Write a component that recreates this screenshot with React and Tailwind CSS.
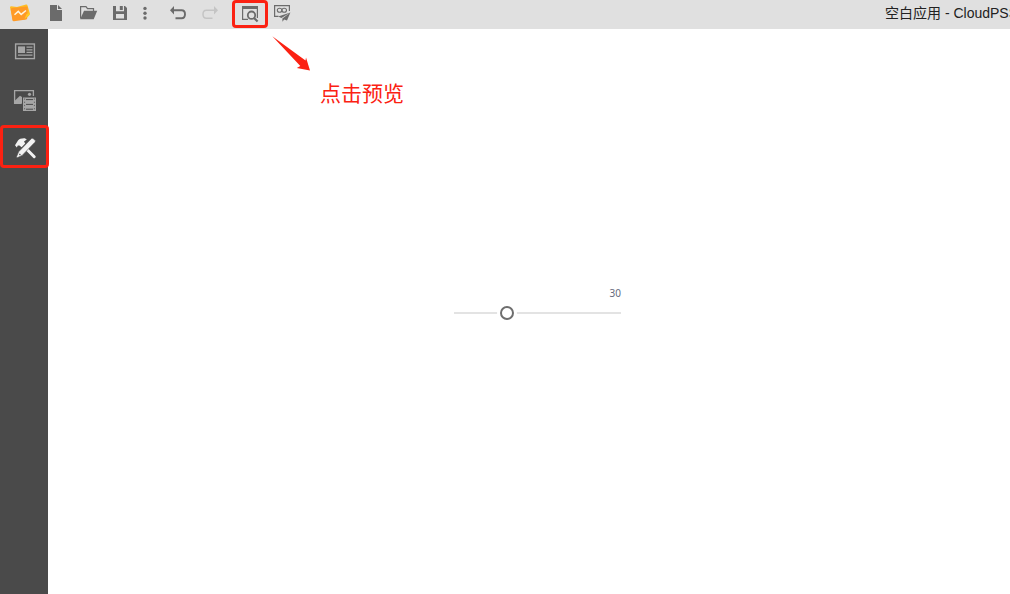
import { useState } from 'react';

function ToolButton({ label, width = 'w-8', disabled = false, marked = false, className = '', children }) {
  return (
    <button
      type="button"
      aria-label={label}
      disabled={disabled}
      className={`relative h-full shrink-0 ${width} ${disabled ? 'text-[#c4c4c4]' : 'text-[#6b6b6b]'} ${className}`}
    >
      {children}
      {marked && <span className="absolute -inset-x-0.5 top-0 h-7 rounded-sm border-3 border-[#fb2112]" />}
    </button>
  );
}

function Icon({ viewBox = '0 0 32 29', children }) {
  return (
    <svg viewBox={viewBox} className="block size-full" fill="currentColor" aria-hidden="true">
      {children}
    </svg>
  );
}

function Logo() {
  return (
    <a href="#home" aria-label="CloudPSS" className="h-full w-10 shrink-0">
      <Icon viewBox="0 0 40 29">
        <path d="M10 7.5 Q10 6.3 11.2 6.2 L17 7 L26 4.6 Q27.3 4.4 27.6 5.8 L29.8 13.2 Q30 14.4 29 15.4 L25 19.5 L13 20 Z" fill="#ffbd22" />
        <path d="M12 8 L26.6 6.6 Q27.6 6.6 27.7 7.6 L27.2 18.2 Q27.2 19.2 26.2 19.4 L14 21.3 Q12.7 21.4 12.4 20.3 L10.8 9.4 Q10.7 8.2 12 8 Z" fill="#ff9a26" />
        <path d="M24.5 19 L26.5 14 L29.6 13 Q29.8 14.6 29 15.4 Z" fill="#ffca24" />
        <path d="M14.5 14.8 L18.3 11.4 L21.2 14.4 L26 10.5" fill="none" stroke="#fff6df" strokeWidth="1.5" />
      </Icon>
    </a>
  );
}

function TopBar() {
  return (
    <header className="flex h-[29px] items-stretch overflow-hidden bg-[#e0e0e0]">
      <Logo />
      <ToolButton label="新建">
        <Icon>
          <path d="M10 5 H17 V10 H22 V21 H10 Z M18 5 L22 9 H18 Z" />
        </Icon>
      </ToolButton>
      <ToolButton label="打开">
        <Icon>
          <path d="M8.6 18.5 V6.7 H14 L15.5 8.7 H21.5 V11" fill="none" stroke="currentColor" strokeWidth="1.2" />
          <path d="M12 10.8 H25.2 L21.7 19.2 H8.2 Z" />
        </Icon>
      </ToolButton>
      <ToolButton label="保存">
        <Icon>
          <path fillRule="evenodd" d="M9 6 H12 V11.3 H20 V6 H21 L23 8 V20 H9 Z M12 14 V18.5 H20 V14 Z M15.8 6 H18.8 V10 H15.8 Z" />
        </Icon>
      </ToolButton>
      <ToolButton label="更多" width="w-[18px]">
        <Icon viewBox="0 0 18 29">
          <circle cx="9" cy="8.4" r="1.7" />
          <circle cx="9" cy="13.2" r="1.7" />
          <circle cx="9" cy="18" r="1.7" />
        </Icon>
      </ToolButton>
      <ToolButton label="撤销" className="ml-2">
        <Icon>
          <path d="M8 10.2 L12 6 V14.4 Z" />
          <path d="M11 10.2 H19.6 Q23 10.2 23 14.2 Q23 18.2 19.6 18.2 H13.5" fill="none" stroke="currentColor" strokeWidth="1.9" />
        </Icon>
      </ToolButton>
      <ToolButton label="重做" disabled>
        <Icon>
          <path d="M24 10.2 L20 6 V14.4 Z" />
          <path d="M21 10.2 H12.4 Q9 10.2 9 14.2 Q9 18.2 12.4 18.2 H18.5" fill="none" stroke="currentColor" strokeWidth="1.5" />
        </Icon>
      </ToolButton>
      <ToolButton label="预览" className="ml-2" marked>
        <Icon>
          <path d="M8 6 H24 V9 H8 Z" />
          <path d="M8.6 9 V19.4 H14 M23.4 9 V18" fill="none" stroke="currentColor" strokeWidth="1.2" />
          <circle cx="17.5" cy="15.2" r="3.7" fill="none" stroke="currentColor" strokeWidth="1.8" />
          <path d="M20 18 L23.6 21.5" stroke="currentColor" strokeWidth="2.2" />
        </Icon>
      </ToolButton>
      <ToolButton label="发布">
        <Icon>
          <path d="M12.5 16.4 H8.6 V5.6 H23.4 V11" fill="none" stroke="currentColor" strokeWidth="1.2" />
          <ellipse cx="13.6" cy="10.3" rx="2.3" ry="2" fill="none" stroke="currentColor" strokeWidth="1.1" />
          <ellipse cx="18.2" cy="10.3" rx="2.3" ry="2" fill="none" stroke="currentColor" strokeWidth="1.1" />
          <path d="M24.4 12.4 L12.2 16.6 L15.4 18 Z M24.4 12.4 L16.4 18.4 V21.8 L18.2 19.4 L21 20.4 Z" />
        </Icon>
      </ToolButton>
      <div className="flex-1" />
      <h1 className="w-[125px] shrink-0 overflow-hidden whitespace-nowrap font-['Liberation_Sans','Noto_Sans_CJK_SC',sans-serif] text-sm leading-[27px] text-[#222]">
        空白应用 - CloudPSS
      </h1>
    </header>
  );
}

function SideButton({ label, active = false, marked = false, children }) {
  return (
    <button
      type="button"
      aria-label={label}
      aria-pressed={active}
      className={`relative size-12 shrink-0 ${active ? 'text-[#f2f2f2]' : 'text-[#a6a6a6]'}`}
    >
      <Icon viewBox="0 0 48 48">{children}</Icon>
      {marked && <span className="absolute top-0 left-0 z-10 h-[43px] w-[49px] rounded-sm border-3 border-[#fb2112]" />}
    </button>
  );
}

function SideBar() {
  return (
    <nav className="relative z-10 flex w-12 shrink-0 flex-col bg-[#4a4a4a]">
      <SideButton label="总览">
        <rect x="15.6" y="15" width="18.8" height="14.6" fill="none" stroke="currentColor" strokeWidth="1.4" />
        <path d="M18 17.4 H25 V24 H18 Z" />
        <path d="M26.5 18.2 H32.5 M26.5 20.8 H32.5 M26.5 23.4 H32.5 M18 26.2 H32.5" stroke="currentColor" strokeWidth="1.3" />
      </SideButton>
      <SideButton label="资源">
        <path d="M21.5 26.4 H14.6 V13.6 H33.4 V19" fill="none" stroke="currentColor" strokeWidth="1.3" />
        <path d="M15 26.5 V23.5 L20 18.8 L22 20 V26.5 Z" />
        <circle cx="29.5" cy="17.3" r="1.6" />
        <path d="M23 20.5 H36 V34 H23 Z" />
        <path d="M26 22.6 H33 M26 27.4 H33 M26 32.2 H33" stroke="#4a4a4a" strokeWidth="1" />
        <path d="M24.6 21.5 V33.5 M34.4 21.5 V33.5" stroke="#4a4a4a" strokeWidth="1" strokeDasharray="1.2 2" opacity="0.75" />
      </SideButton>
      <SideButton label="工具" active marked>
        <path d="M15 20.3 L18 15.4 Q19.8 13 24.8 13.2 L26.8 14.4 L24 16.6 L25.2 18.6 L21.6 22.2 L19.4 20.6 L17.8 20.6 L16.8 22.4 Z" />
        <path d="M27.5 25 L34.2 31.7" stroke="currentColor" strokeWidth="3" strokeLinecap="round" />
        <path
          d="M31.4 13.6 Q32.4 12.8 33.4 13.7 L35 15.3 Q35.8 16.3 34.9 17.3 L22.2 30.4 L17.2 32.8 L16.4 32 L18.6 26.8 Z"
          stroke="#4a4a4a"
          strokeWidth="0.6"
        />
        <path d="M19.4 29 L20.4 30" stroke="#4a4a4a" strokeWidth="1.2" />
      </SideButton>
    </nav>
  );
}

function SliderWidget() {
  const [value, setValue] = useState(30);
  return (
    <div className="absolute top-[257px] left-[406px] flex w-[167px] flex-col">
      <output htmlFor="slider" className="self-end font-['Noto_Sans',sans-serif] text-[10px] leading-[14px] text-[#666b7c]">
        {value}
      </output>
      <input
        id="slider"
        aria-label="滑块"
        type="range"
        min="0"
        max="100"
        value={value}
        onChange={(e) => setValue(Number(e.target.value))}
        className="mt-1 h-[18px] w-full appearance-none bg-transparent [&::-webkit-slider-runnable-track]:h-0.5 [&::-webkit-slider-runnable-track]:bg-[#e3e3e3] [&::-webkit-slider-thumb]:-mt-1.5 [&::-webkit-slider-thumb]:size-3.5 [&::-webkit-slider-thumb]:appearance-none [&::-webkit-slider-thumb]:rounded-full [&::-webkit-slider-thumb]:border-2 [&::-webkit-slider-thumb]:border-[#6e6e6e] [&::-webkit-slider-thumb]:bg-white [&::-webkit-slider-thumb]:shadow-[0_0_0_3px_#fff]"
      />
    </div>
  );
}

export default function App() {
  return (
    <div className="flex min-h-screen flex-col bg-white">
      <TopBar />
      <div className="flex flex-1">
        <SideBar />
        <main className="relative flex-1 overflow-hidden bg-white">
          <svg viewBox="0 0 40 36" className="absolute top-[7px] left-[223px] h-9 w-10" fill="#fb2112" aria-hidden="true">
            <path d="M1.3 0.3 L34.5 24.5 L35 21.6 L39 34.5 L25.8 32 L29.3 29.9 Z" />
          </svg>
          <p className="absolute top-12 left-[272px] whitespace-nowrap font-['Noto_Sans_CJK_SC',sans-serif] text-[21px] leading-[30px] text-[#fb2112]">
            点击预览
          </p>
          <SliderWidget />
        </main>
      </div>
    </div>
  );
}
